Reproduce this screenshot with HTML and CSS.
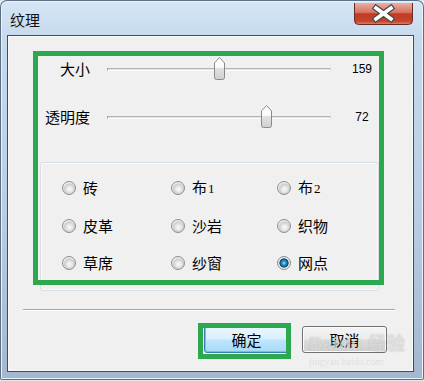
FILE: index.html
```html
<!DOCTYPE html>
<html lang="zh-CN">
<head>
<meta charset="utf-8">
<title>纹理</title>
<link rel="stylesheet" href="styles.css">
</head>
<body>
<div class="window">
  <div class="titlebar">
    <span class="title">纹理</span>
    <div class="close">
      <svg width="59" height="22" viewBox="0 0 59 22">
        <defs>
          <linearGradient id="cg" x1="0" y1="0" x2="0" y2="1">
            <stop offset="0" stop-color="#eab0a4"/>
            <stop offset="0.45" stop-color="#d7705e"/>
            <stop offset="0.5" stop-color="#c23a25"/>
            <stop offset="0.85" stop-color="#c4442e"/>
            <stop offset="1" stop-color="#de8a70"/>
          </linearGradient>
        </defs>
        <path d="M0.5 0 V17.5 Q0.5 21.5 4.5 21.5 H54.5 Q58.5 21.5 58.5 17.5 V0" fill="url(#cg)" stroke="#6a2a22"/>
        <path d="M22 5 L37 16 M37 5 L22 16" stroke="#4a4a4a" stroke-width="6" stroke-linecap="square"/>
        <path d="M22 5 L37 16 M37 5 L22 16" stroke="#ffffff" stroke-width="3.6" stroke-linecap="square"/>
      </svg>
    </div>
  </div>
  <div class="client">
    <div class="sliders">
      <div class="srow">
        <span class="slabel">大小</span>
        <div class="track">
          <svg class="thumb" style="left:106px" width="11" height="23" viewBox="0 0 11 23">
            <defs>
              <linearGradient id="tg" x1="0" y1="0" x2="0" y2="1">
                <stop offset="0" stop-color="#ffffff"/>
                <stop offset="0.45" stop-color="#fafafa"/>
                <stop offset="0.5" stop-color="#e2e2e2"/>
                <stop offset="1" stop-color="#cfcfcf"/>
              </linearGradient>
            </defs>
            <path d="M0.5 6 L5.5 0.5 L10.5 6 V20.5 Q10.5 22.5 8.5 22.5 H2.5 Q0.5 22.5 0.5 20.5 Z" fill="url(#tg)" stroke="#8a8a8a"/>
          </svg>
        </div>
        <span class="sval">159</span>
      </div>
      <div class="srow">
        <span class="slabel">透明度</span>
        <div class="track">
          <svg class="thumb" style="left:153px" width="11" height="23" viewBox="0 0 11 23">
            <path d="M0.5 6 L5.5 0.5 L10.5 6 V20.5 Q10.5 22.5 8.5 22.5 H2.5 Q0.5 22.5 0.5 20.5 Z" fill="url(#tg)" stroke="#8a8a8a"/>
          </svg>
        </div>
        <span class="sval">72</span>
      </div>
    </div>
    <div class="group">
      <div class="opt"><span class="radio"></span><span>砖</span></div>
      <div class="opt"><span class="radio"></span><span>布<span class="num">1</span></span></div>
      <div class="opt"><span class="radio"></span><span>布<span class="num">2</span></span></div>
      <div class="opt"><span class="radio"></span><span>皮革</span></div>
      <div class="opt"><span class="radio"></span><span>沙岩</span></div>
      <div class="opt"><span class="radio"></span><span>织物</span></div>
      <div class="opt"><span class="radio"></span><span>草席</span></div>
      <div class="opt"><span class="radio"></span><span>纱窗</span></div>
      <div class="opt"><span class="radio radio-on"></span><span>网点</span></div>
    </div>
    <div class="sep"></div>
    <div class="buttons">
      <div class="btn btn-default">确定</div>
      <div class="btn">取消</div>
    </div>
  </div>
  <div class="mark mark-main"></div>
  <div class="mark mark-ok"></div>
  <div class="watermark">Bai<span class="paw">du</span> 经验</div>
  <div class="watermark-url">jingyan.baidu.com</div>
</div>
</body>
</html>
```

FILE: styles.css
```css
* { box-sizing: border-box; }

html, body {
  margin: 0;
  padding: 0;
}

body {
  width: 424px;
  height: 381px;
  overflow: hidden;
  background: #e4e9ef;
  font-family: "Noto Sans CJK SC", "Noto Sans", sans-serif;
  font-size: 14px;
  color: #000;
}

.window {
  position: relative;
  width: 424px;
  height: 380px;
  border-radius: 7px 7px 2px 2px;
  background: linear-gradient(180deg, #d6e6f5 0%, #c6daee 10%, #b9cee4 55%, #a3b8cf 100%);
  box-shadow: inset 0 0 0 1px #5d6f85, inset 0 0 0 2px #e9f1f9;
  padding-top: 0;
}

.titlebar {
  display: flex;
  align-items: flex-start;
  height: 35px;
  padding-left: 10px;
}

.title {
  margin-top: 10px;
  font-size: 15px;
  line-height: 20px;
  color: #111;
}

.close {
  margin-left: auto;
  margin-right: 11px;
  margin-top: 3px;
  width: 59px;
  height: 22px;
}

.close svg { display: block; }

.client {
  margin-left: 7px;
  width: 407px;
  height: 337px;
  background: #f0f0f0;
  border: 1px solid #3b4d63;
  box-shadow: inset 0 0 0 1px #fafafa;
  display: flex;
  flex-direction: column;
}

.sliders {
  display: flex;
  flex-direction: column;
  gap: 24px;
  padding-top: 21px;
}

.srow {
  display: grid;
  grid-template-columns: 82px 224px 28px;
  column-gap: 17px;
  align-items: center;
  height: 24px;
}

.slabel {
  text-align: right;
  font-size: 15px;
  line-height: 20px;
}

.track {
  position: relative;
  height: 3px;
  border-top: 1px solid #b4b4b4;
  border-bottom: 1px solid #fdfdfd;
  background: #e4e4e4;
  border-left: 1px solid #9a9a9a;
  border-right: 1px solid #d8d8d8;
}

.thumb {
  position: absolute;
  top: -12px;
  display: block;
}

.sval {
  font-family: "Liberation Sans", Arial, sans-serif;
  font-size: 12px;
  text-align: center;
  line-height: 14px;
}

.group {
  margin-top: 33px;
  margin-left: 32px;
  width: 339px;
  height: 129px;
  border: 1px solid #d5dfe5;
  border-radius: 3px;
  box-shadow: inset 0 0 0 1px #fbfbfb;
  padding: 13px 0 0 21px;
  display: grid;
  grid-template-columns: 109px 106px auto;
  grid-auto-rows: 24px;
  row-gap: 13.5px;
}

.opt {
  display: flex;
  align-items: center;
  gap: 7px;
  font-size: 15px;
  line-height: 20px;
}

.num {
  font-family: "Liberation Serif", serif;
  font-size: 13px;
  margin-left: 1px;
}

.radio {
  flex: none;
  width: 14px;
  height: 14px;
  border-radius: 50%;
  border: 1px solid #8c8e8f;
  background: radial-gradient(circle at 55% 60%, #fbfbfb 0, #e6e6e6 30%, #cdcdcd 52%, #e9e9e9 64%, #f6f6f6 100%);
}

.radio-on {
  background: radial-gradient(circle at 50% 50%, #9fe3ff 0, #3aa3d8 18%, #16659b 40%, #0b3d63 50%, #e5e5e5 58%, #f6f6f6 100%);
}

.sep {
  margin: 18px 18px 0 15px;
  border-top: 1px solid #a6a6a6;
  border-bottom: 1px solid #ffffff;
}

.buttons {
  display: flex;
  justify-content: flex-end;
  gap: 13px;
  padding-right: 26px;
  margin-top: 15px;
}

.btn {
  width: 85px;
  height: 27px;
  border: 1px solid #707070;
  border-radius: 3px;
  background: linear-gradient(180deg, #f4f4f4 0%, #ebebeb 48%, #dddddd 52%, #cfcfcf 100%);
  box-shadow: inset 0 0 0 1px #fcfcfc;
  display: flex;
  align-items: center;
  justify-content: center;
  font-size: 15px;
  line-height: 20px;
}

.btn-default {
  border-color: #3c7fb1;
  background: linear-gradient(180deg, #eaf6fd 0%, #d9f0fc 48%, #bee6fd 52%, #a7d9f5 100%);
  box-shadow: inset 0 0 0 1px #48d2f8;
}

.mark {
  position: absolute;
  border: 5px solid #2ca84e;
}

.mark-main {
  left: 33px;
  top: 51px;
  width: 351px;
  height: 234px;
}

.mark-ok {
  left: 198px;
  top: 323px;
  width: 93px;
  height: 36px;
}

.watermark {
  position: absolute;
  left: 309px;
  top: 334px;
  font-family: "Liberation Sans", Arial, sans-serif;
  font-weight: bold;
  font-size: 18px;
  line-height: 20px;
  color: rgba(255, 255, 255, 0.55);
  text-shadow: 0 0 1px rgba(120, 120, 120, 0.5);
  letter-spacing: 0.5px;
}

.watermark .paw {
  margin-left: 1px;
}

.watermark-url {
  position: absolute;
  left: 309px;
  top: 356px;
  font-family: "Liberation Serif", serif;
  font-size: 10px;
  line-height: 12px;
  color: rgba(200, 200, 200, 0.45);
}
```
